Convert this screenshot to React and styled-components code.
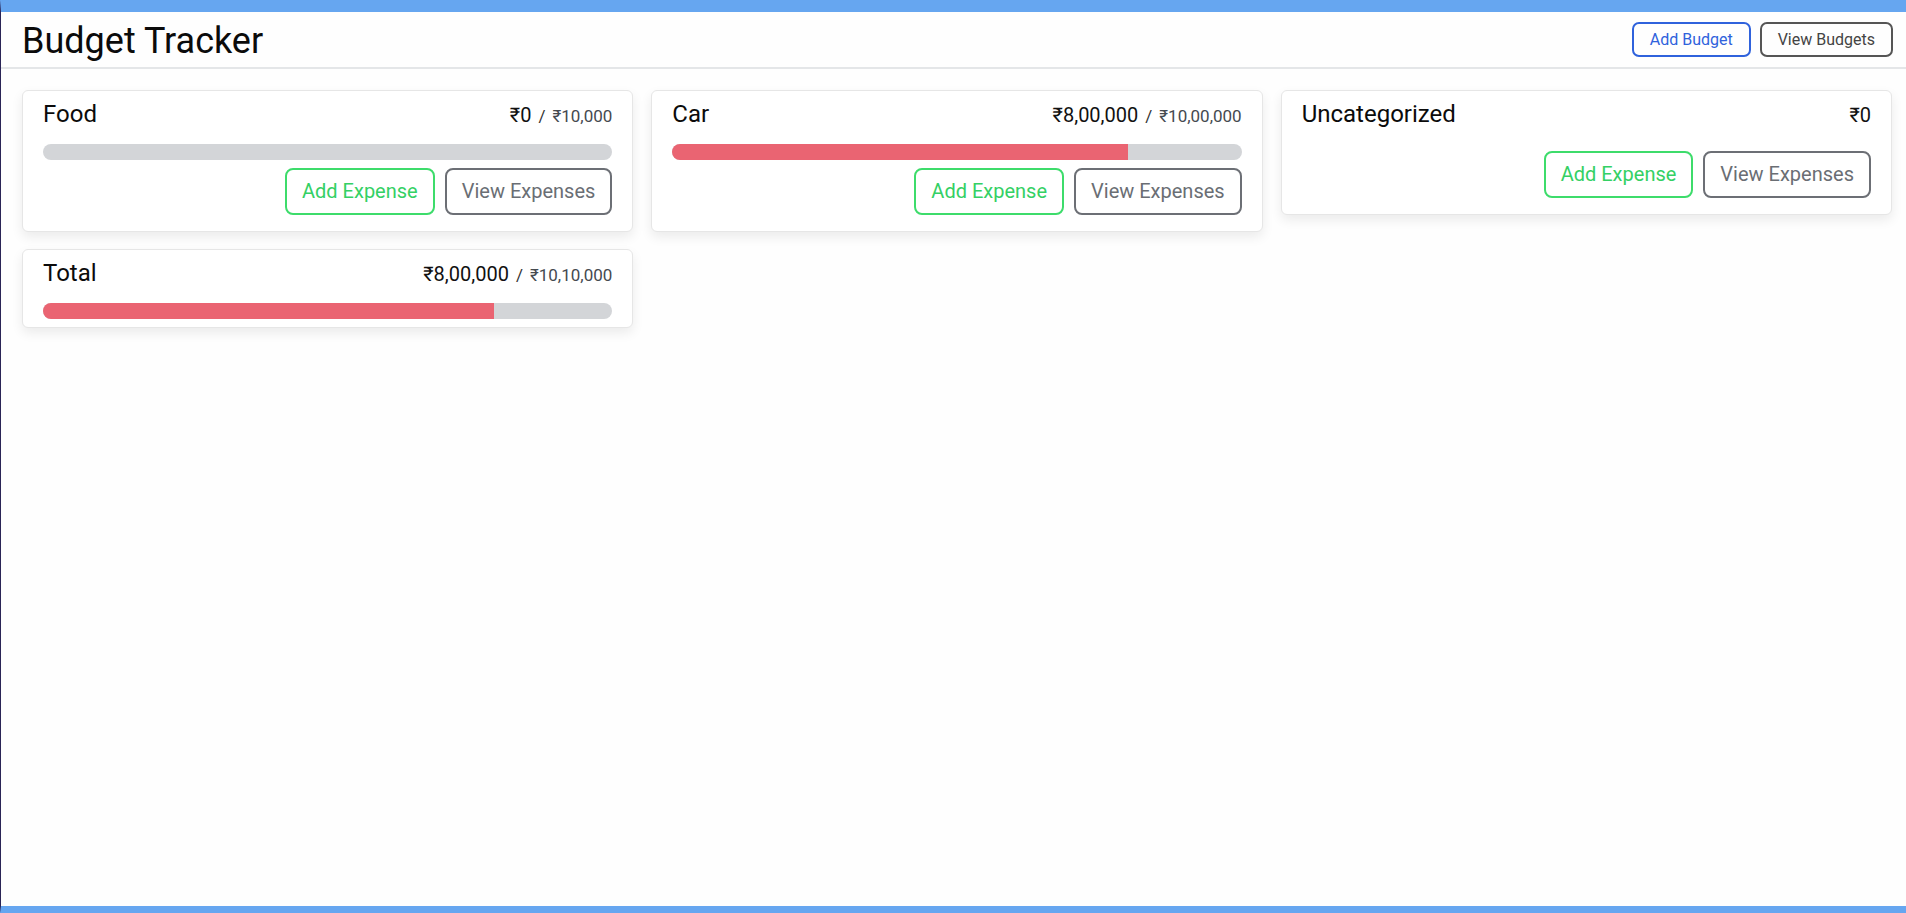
import styled, { createGlobalStyle } from 'styled-components';

const GlobalStyle = createGlobalStyle`
  html, body {
    margin: 0;
    padding: 0;
    background: #fefefe;
    font-family: Roboto, "Noto Sans", sans-serif;
    color: #111;
  }
  * {
    box-sizing: border-box;
  }
`;

const Frame = styled.div`
  min-height: 913px;
  display: flex;
  flex-direction: column;
  border-top: 12px solid #66a6f0;
  border-bottom: 7px solid #66a6f0;
  border-left: 1px solid #2a2456;
  background: #fefefe;
`;

const Header = styled.header`
  height: 57px;
  display: flex;
  align-items: center;
  justify-content: space-between;
  padding: 0 13px 0 21px;
  border-bottom: 2px solid #e4e6e8;
`;

const Title = styled.h1`
  margin: 4px 0 0;
  font-size: 36px;
  font-weight: 400;
  line-height: 1.2;
  color: #0b0b0b;
`;

const HeaderActions = styled.div`
  display: flex;
  gap: 9px;
`;

const OutlineButton = styled.button`
  font-family: inherit;
  background: transparent;
  border: 2px solid ${(p) => p.$color};
  color: ${(p) => p.$text || p.$color};
  border-radius: ${(p) => (p.$small ? '7px' : '8px')};
  font-size: ${(p) => (p.$small ? '16px' : '20px')};
  height: ${(p) => (p.$small ? '35px' : '47px')};
  padding: ${(p) => (p.$small ? '0 16px' : '0 15px')};
  line-height: 1;
  cursor: pointer;
`;

const Main = styled.main`
  flex: 1;
  padding: 21px 14px 0 21px;
`;

const Grid = styled.div`
  display: grid;
  grid-template-columns: repeat(3, 1fr);
  column-gap: 18px;
  row-gap: 17px;
  align-items: start;
`;

const Card = styled.div`
  background: #fff;
  border: 1px solid #e6e6e6;
  border-radius: 6px;
  box-shadow: 0 5px 12px rgba(0, 0, 0, 0.08);
  padding: 9px 20px 8px;
`;

const CardTitle = styled.div`
  display: flex;
  justify-content: space-between;
  align-items: baseline;
  margin-bottom: 15px;
  line-height: 1.2;
`;

const Name = styled.span`
  font-size: 24px;
  color: #0b0b0b;
`;

const Amount = styled.span`
  font-size: 20px;
  color: #111;
`;

const Max = styled.span`
  font-size: 17px;
  color: #454a50;
`;

const Slash = styled.span`
  font-size: 17px;
  color: #333;
  margin: 0 7px;
`;

const Track = styled.div`
  height: 16px;
  border-radius: 8px;
  background: #d3d5d8;
  overflow: hidden;
`;

const Fill = styled.div`
  height: 100%;
  background: #ea6472;
`;

const ButtonRow = styled.div`
  display: flex;
  justify-content: flex-end;
  gap: 10px;
  margin-top: ${(p) => (p.$afterBar ? '8px' : '22px')};
  margin-bottom: 8px;
`;

const budgets = [
  { name: 'Food', amount: 0, max: 10000 },
  { name: 'Car', amount: 800000, max: 1000000 },
];

const fmt = (n) => '₹' + n.toLocaleString('en-IN');

const BudgetCard = ({ name, amount, max, hideButtons }) => {
  const hasMax = max !== undefined;
  return (
    <Card>
      <CardTitle>
        <Name>{name}</Name>
        <span>
          <Amount>{fmt(amount)}</Amount>
          {hasMax && (
            <>
              <Slash>/</Slash>
              <Max>{fmt(max)}</Max>
            </>
          )}
        </span>
      </CardTitle>
      {hasMax && (
        <Track>
          <Fill style={{ width: `${(amount / max) * 100}%` }} />
        </Track>
      )}
      {!hideButtons && (
        <ButtonRow $afterBar={hasMax}>
          <OutlineButton $color="#3ddc6b" $text="#34d064">
            Add Expense
          </OutlineButton>
          <OutlineButton $color="#6c6f75" $text="#6a6e74">
            View Expenses
          </OutlineButton>
        </ButtonRow>
      )}
    </Card>
  );
};

const App = () => {
  const total = budgets.reduce((s, b) => s + b.amount, 0);
  const totalMax = budgets.reduce((s, b) => s + b.max, 0);

  return (
    <>
      <GlobalStyle />
      <Frame>
        <Header>
          <Title>Budget Tracker</Title>
          <HeaderActions>
            <OutlineButton $small $color="#2f62dc" $text="#2f62dc">
              Add Budget
            </OutlineButton>
            <OutlineButton $small $color="#555" $text="#444">
              View Budgets
            </OutlineButton>
          </HeaderActions>
        </Header>
        <Main>
          <Grid>
            {budgets.map((b) => (
              <BudgetCard key={b.name} {...b} />
            ))}
            <BudgetCard name="Uncategorized" amount={0} />
            <BudgetCard name="Total" amount={total} max={totalMax} hideButtons />
          </Grid>
        </Main>
      </Frame>
    </>
  );
};

export default App;
